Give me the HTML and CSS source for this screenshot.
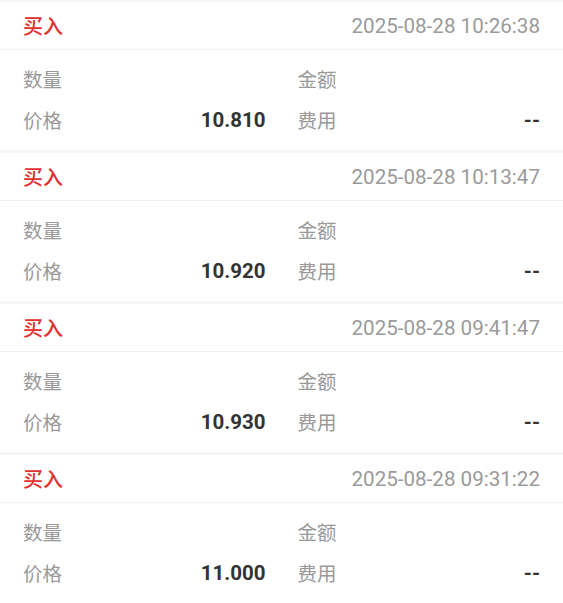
FILE: index.html
```html
<!DOCTYPE html>
<html lang="zh-CN">
<head>
<meta charset="utf-8">
<link rel="stylesheet" href="styles.css">
</head>
<body>
<div class="list">
  <div class="card">
    <div class="head"><span class="side">买入</span><span class="time">2025-08-28 10:26:38</span></div>
    <div class="grid">
      <span class="label">数量</span><span class="value"></span>
      <span class="label">金额</span><span class="value"></span>
      <span class="label">价格</span><span class="value">10.810</span>
      <span class="label">费用</span><span class="value">--</span>
    </div>
  </div>
  <div class="card">
    <div class="head"><span class="side">买入</span><span class="time">2025-08-28 10:13:47</span></div>
    <div class="grid">
      <span class="label">数量</span><span class="value"></span>
      <span class="label">金额</span><span class="value"></span>
      <span class="label">价格</span><span class="value">10.920</span>
      <span class="label">费用</span><span class="value">--</span>
    </div>
  </div>
  <div class="card">
    <div class="head"><span class="side">买入</span><span class="time">2025-08-28 09:41:47</span></div>
    <div class="grid">
      <span class="label">数量</span><span class="value"></span>
      <span class="label">金额</span><span class="value"></span>
      <span class="label">价格</span><span class="value">10.930</span>
      <span class="label">费用</span><span class="value">--</span>
    </div>
  </div>
  <div class="card">
    <div class="head"><span class="side">买入</span><span class="time">2025-08-28 09:31:22</span></div>
    <div class="grid">
      <span class="label">数量</span><span class="value"></span>
      <span class="label">金额</span><span class="value"></span>
      <span class="label">价格</span><span class="value">11.000</span>
      <span class="label">费用</span><span class="value">--</span>
    </div>
  </div>
</div>
</body>
</html>
```
FILE: styles.css
```css
html, body {
  margin: 0;
  padding: 0;
  background: #f5f6f7;
  font-family: Roboto, "Noto Sans CJK SC", sans-serif;
}
.list {
  display: flex;
  flex-direction: column;
  gap: 3px;
  padding-top: 2px;
}
.card {
  background: #ffffff;
}
.head {
  height: 47px;
  padding: 0 23px;
  display: flex;
  align-items: center;
  justify-content: space-between;
  border-bottom: 1px solid #f1f1f1;
}
.side {
  color: #e2312f;
  font-size: 20px;
  font-weight: 500;
}
.time {
  color: #9a9a9a;
  font-size: 20.6px;
}
.grid {
  display: grid;
  grid-template-columns: auto 1fr auto 1fr;
  grid-auto-rows: 41px;
  column-gap: 32px;
  padding: 8px 23px 10px;
  align-items: center;
}
.label {
  color: #999999;
  font-size: 19.5px;
}
.value {
  color: #333333;
  font-size: 20.5px;
  font-weight: 700;
  text-align: right;
}
```
